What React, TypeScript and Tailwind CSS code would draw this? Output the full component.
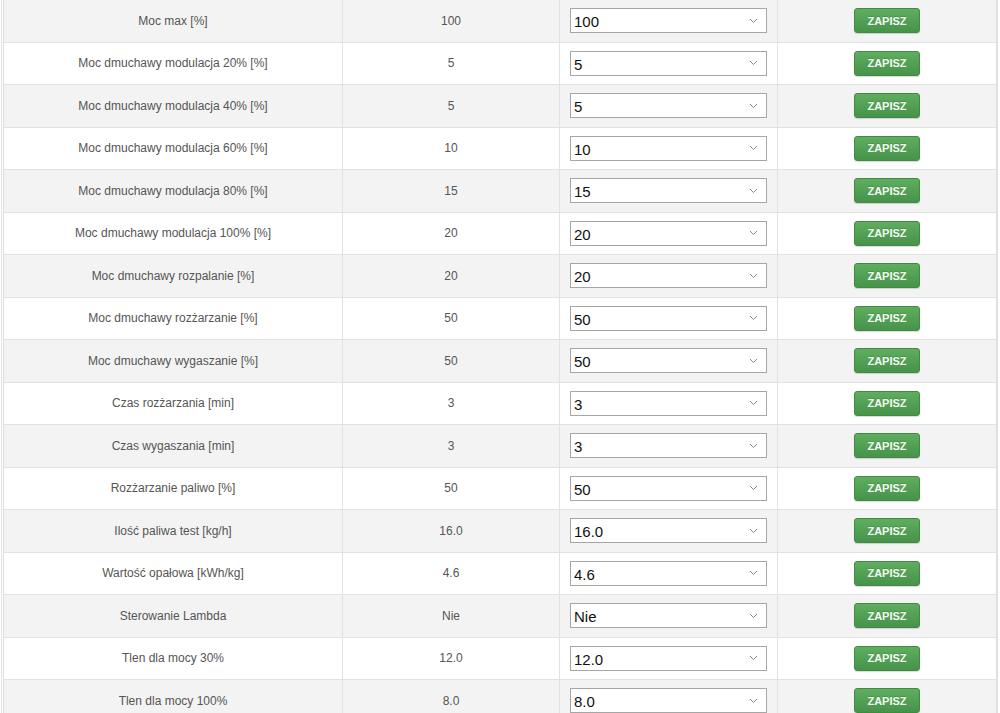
import React from "react";

type Row = {
	label: string;
	value: string;
};

const rows: Row[] = [
	{ label: "Moc max [%]", value: "100" },
	{ label: "Moc dmuchawy modulacja 20% [%]", value: "5" },
	{ label: "Moc dmuchawy modulacja 40% [%]", value: "5" },
	{ label: "Moc dmuchawy modulacja 60% [%]", value: "10" },
	{ label: "Moc dmuchawy modulacja 80% [%]", value: "15" },
	{ label: "Moc dmuchawy modulacja 100% [%]", value: "20" },
	{ label: "Moc dmuchawy rozpalanie [%]", value: "20" },
	{ label: "Moc dmuchawy rozżarzanie [%]", value: "50" },
	{ label: "Moc dmuchawy wygaszanie [%]", value: "50" },
	{ label: "Czas rozżarzania [min]", value: "3" },
	{ label: "Czas wygaszania [min]", value: "3" },
	{ label: "Rozżarzanie paliwo [%]", value: "50" },
	{ label: "Ilość paliwa test [kg/h]", value: "16.0" },
	{ label: "Wartość opałowa [kWh/kg]", value: "4.6" },
	{ label: "Sterowanie Lambda", value: "Nie" },
	{ label: "Tlen dla mocy 30%", value: "12.0" },
	{ label: "Tlen dla mocy 100%", value: "8.0" },
];

function Chevron() {
	return (
		<svg width="9" height="6" viewBox="0 0 9 6" fill="none">
			<path d="M1 1l3.5 3.5L8 1" stroke="#8a8a8a" strokeWidth="1" />
		</svg>
	);
}

export default function App() {
	return (
		<div className="w-[1000px] h-[713px] overflow-hidden bg-white font-['Liberation_Sans',Arial,sans-serif]">
			<div className="ml-[1px] w-[997px] border-l border-r border-[#e3e3e3] pl-[1px]">
				<div className="border-l border-r border-[#dedede]">
					{rows.map((row, i) => (
						<div
							key={row.label}
							className={`grid grid-cols-[339px_217px_218px_1fr] h-[42.5px] border-b border-[#e2e2e2] ${
								i % 2 === 0 ? "bg-[#f3f3f3]" : "bg-white"
							}`}
						>
							<div className="flex items-center justify-center border-r border-[#e2e2e2] text-[12px] text-[#555]">
								{row.label}
							</div>
							<div className="flex items-center justify-center border-r border-[#e2e2e2] text-[12px] text-[#555]">
								{row.value}
							</div>
							<div className="flex items-center justify-center border-r border-[#e2e2e2]">
								<div className="flex items-center justify-between w-[197px] h-[25px] border border-[#a6a6a6] bg-white pl-[3px] pr-[8px]">
									<span className="text-[15px] leading-none text-[#111] pt-[2px]">{row.value}</span>
									<Chevron />
								</div>
							</div>
							<div className="flex items-center justify-center">
								<button className="w-[66px] h-[25px] rounded-[3px] border border-[#428a42] bg-gradient-to-b from-[#5fae5f] to-[#46934a] text-[11px] font-bold text-[#f4fbf4] shadow-[0_1px_1px_rgba(0,0,0,0.15)] [text-shadow:0_-1px_0_rgba(0,0,0,0.15)]">
									ZAPISZ
								</button>
							</div>
						</div>
					))}
				</div>
			</div>
		</div>
	);
}
